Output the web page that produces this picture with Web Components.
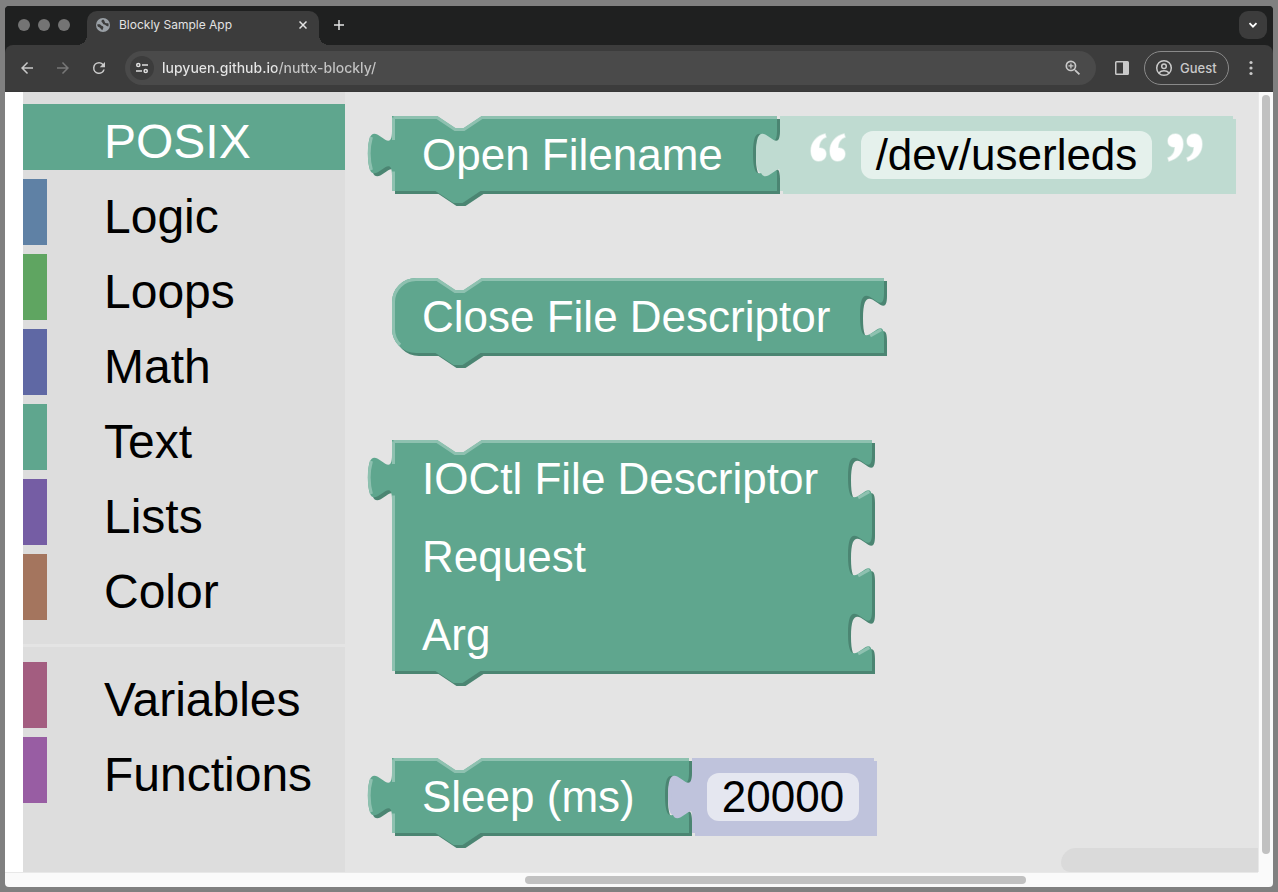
<!DOCTYPE html>
<html lang="en">
<head>
<meta charset="utf-8">
<title>Blockly Sample App</title>
<style>
  body { margin: 0; background: #808080; font-family: "Liberation Sans", Arial, sans-serif; }
</style>
</head>
<body>
<app-window>
  <tab-strip slot="chrome"></tab-strip>
  <nav-bar slot="chrome"></nav-bar>
  <tool-box slot="page">
    <tool-category colour="#5fa68e" selected>POSIX</tool-category>
    <tool-category colour="#5f81a5">Logic</tool-category>
    <tool-category colour="#5fa561">Loops</tool-category>
    <tool-category colour="#5f68a4">Math</tool-category>
    <tool-category colour="#5fa68e">Text</tool-category>
    <tool-category colour="#755da4">Lists</tool-category>
    <tool-category colour="#a4755e">Color</tool-category>
    <tool-separator></tool-separator>
    <tool-category colour="#a35d80">Variables</tool-category>
    <tool-category colour="#985da3">Functions</tool-category>
  </tool-box>
  <block-flyout slot="page">
    <block-row>
      <code-block output inputs="1"><block-label>Open Filename</block-label></code-block>
      <value-block kind="text" value="/dev/userleds"></value-block>
    </block-row>
    <block-row>
      <code-block inputs="1"><block-label>Close File Descriptor</block-label></code-block>
    </block-row>
    <block-row>
      <code-block output inputs="3">
        <block-label>IOCtl File Descriptor</block-label>
        <block-label>Request</block-label>
        <block-label>Arg</block-label>
      </code-block>
    </block-row>
    <block-row>
      <code-block output inputs="1"><block-label>Sleep (ms)</block-label></code-block>
      <value-block kind="number" value="20000"></value-block>
    </block-row>
  </block-flyout>
</app-window>

<script>
class BaseElement extends HTMLElement {
  constructor() {
    super();
    this.attachShadow({ mode: "open" });
  }
  connectedCallback() {
    this.shadowRoot.innerHTML = this.template();
    this.ready();
  }
  template() { return ""; }
  ready() {}
}

/* Browser window: chrome bars on top, page with its two scrollbars below. */
class AppWindow extends BaseElement {
  template() {
    return `<style>
      :host { display: block; box-sizing: border-box; height: 100vh; min-height: 840px; padding: 6px 5px 5px; }
      .frame { display: flex; flex-direction: column; height: 100%; border-radius: 4px; overflow: hidden; background: #fafafa; }
      .chrome { flex: none; background: #1f2020; }
      .page { display: grid; flex: 1; min-height: 0; grid-template-columns: 1fr 15px; grid-template-rows: 1fr 15px; }
      .content { display: flex; min-width: 0; overflow: hidden; padding-left: 18px; background: #fff; }
      .v { box-sizing: border-box; padding: 3px 3px 18px 3px; border-left: 1px solid #e8e8e8; }
      .h { box-sizing: border-box; padding: 3px 0 3px; border-top: 1px solid #e8e8e8; display: grid; grid-template-columns: 520fr 501fr 232fr; }
      .thumb { border-radius: 4px; background: #c1c1c1; height: 100%; }
      .h .thumb { grid-column: 2; height: 8px; }
    </style>
    <div class="frame">
      <div class="chrome"><slot name="chrome"></slot></div>
      <div class="page">
        <main class="content"><slot name="page"></slot></main>
        <div class="v"><div class="thumb"></div></div>
        <div class="h"><div class="thumb"></div></div>
      </div>
    </div>`;
  }
}

class TabStrip extends BaseElement {
  template() {
    return `<style>
      :host { display: flex; height: 39px; box-sizing: border-box; padding: 5px 6px 0 13px; background: #1f2020; color: #e3e3e3; font: 500 12px Inter, sans-serif; }
      .lights { display: flex; gap: 8px; padding: 8px 17px 0 0; }
      .lights i { width: 12px; height: 12px; border-radius: 50%; background: #747474; }
      .tab { position: relative; display: flex; box-sizing: border-box; align-items: center; width: 232px; padding: 0 8px 7px 8px; border-radius: 10px 10px 0 0; background: #3c3c3c; }
      .tab::before, .tab::after { content: ""; position: absolute; bottom: 0; width: 10px; height: 10px; }
      .tab::before { left: -10px; background: radial-gradient(circle at 0 0, transparent 10px, #3c3c3c 10px); }
      .tab::after { right: -10px; background: radial-gradient(circle at 100% 0, transparent 10px, #3c3c3c 10px); }
      .title { flex: 1; padding-left: 8px; font-weight: 400; }
      button { display: grid; place-items: center; padding: 0; border: 0; background: none; color: inherit; }
      .close { width: 16px; height: 16px; }
      .new { width: 28px; height: 28px; margin-left: 6px; }
      .search { width: 28px; height: 28px; margin-left: auto; border-radius: 9px; background: #3c3c3c; }
      svg { display: block; }
    </style>
    <div class="lights"><i></i><i></i><i></i></div>
    <div class="tab">
      <svg width="16" height="16" viewBox="0 0 16 16"><circle cx="8" cy="8" r="7" fill="#9aa0a6"/><path d="M2.200 7.400C4.500 6.800 6 7.400 6.500 8.800C8 9 8.600 9.800 8.300 11C7.800 11.500 7.600 12.400 7.500 13.300C5.600 12.600 6 11.400 4.600 10.600C3 9.800 2.200 9 2.200 7.400ZM8.200 2.400C6.300 3 6 4.300 6.900 5.200C8 5.500 7.500 7 8.900 7.400C10.600 7.300 11 9 13.200 9.600C13.800 8.500 13.700 7.200 13.300 6.200C12 6.600 11.300 5.800 10.400 6C9.300 5 10.200 4 8.200 2.400Z" fill="#3c3c3c"/></svg>
      <span class="title">Blockly Sample App</span>
      <button class="close" aria-label="Close tab"><svg width="8" height="8" viewBox="0 0 8 8" stroke="currentColor" stroke-width="1.500"><path d="M.5.5l7 7M7.500.5l-7 7"/></svg></button>
    </div>
    <button class="new" aria-label="New tab"><svg width="12" height="12" viewBox="0 0 12 12" stroke="currentColor" stroke-width="1.500"><path d="M6 1v10M1 6h10"/></svg></button>
    <button class="search" aria-label="Search tabs"><svg width="10" height="10" viewBox="0 0 10 10" fill="none" stroke="#fff" stroke-width="1.800"><path d="M1.500 3.200 5 6.700 8.500 3.200"/></svg></button>`;
  }
}

class NavBar extends BaseElement {
  template() {
    return `<style>
      :host { display: flex; align-items: center; height: 47px; box-sizing: border-box; padding: 0 13px; background: #3c3c3c; color: #c9c9c9; font: 14px Inter, sans-serif; border-bottom: 1px solid #383838; border-radius: 8px 8px 0 0; }
      button { display: grid; place-items: center; box-sizing: border-box; width: 18px; height: 34px; padding: 0; border: 0; background: none; color: inherit; font: inherit; }
      svg { display: block; fill: currentColor; }
      .nav { display: flex; gap: 18px; }
      .nav .off { color: #777; }
      .omni { display: flex; flex: 1; align-items: center; height: 34px; margin-left: 17px; padding: 0 15px 0 5px; border-radius: 17px; background: #4a4a4a; }
      .site { width: 24px; height: 24px; border-radius: 50%; background: #3c3c3c; color: #dedede; }
      input { flex: 1; min-width: 0; height: 22px; margin: 0 0 2px 8px; padding: 0; border: 0; outline: 0; color: #e3e3e3; font: inherit; font-weight: 500;
        background: linear-gradient(90deg, #e6e6e6 115px, #c4c4c4 115px); -webkit-background-clip: text; background-clip: text; -webkit-text-fill-color: transparent; }
      .panel { margin: 0 13px 0 17px; }
      .guest { display: flex; align-items: center; gap: 7px; width: 85px; padding: 0 0 0 10px; border: 1px solid #8a8a8a; border-radius: 17px; font-size: 13px; font-weight: 500; }
      .more { margin-left: 13px; }
    </style>
    <div class="nav">
      <button aria-label="Back"><svg width="18" height="18" viewBox="0 0 24 24"><path d="M20 11H7.830l5.590-5.590L12 4l-8 8 8 8 1.410-1.410L7.830 13H20z"/></svg></button>
      <button class="off" aria-label="Forward"><svg width="18" height="18" viewBox="0 0 24 24"><path d="M12 4l-1.410 1.410L16.170 11H4v2h12.170l-5.580 5.590L12 20l8-8z"/></svg></button>
      <button aria-label="Reload"><svg width="18" height="18" viewBox="0 0 24 24"><path d="M17.650 6.350A7.960 7.960 0 0 0 12 4a8 8 0 1 0 7.730 10h-2.080A6 6 0 1 1 12 6c1.660 0 3.140.69 4.220 1.780L13 11h7V4z"/></svg></button>
    </div>
    <div class="omni">
      <button class="site" aria-label="Site information"><svg width="14" height="14" viewBox="0 0 14 14" fill="none" stroke="currentColor" stroke-width="1.500" style="fill:none"><circle cx="3.300" cy="4" r="1.600"/><path d="M7 4h6M1 10h6"/><circle cx="10.700" cy="10" r="1.600"/></svg></button>
      <input type="text" aria-label="Address" value="lupyuen.github.io/nuttx-blockly/">
      <button aria-label="Zoom"><svg width="20" height="20" viewBox="0 0 24 24"><path d="M15.500 14h-.79l-.28-.27A6.500 6.500 0 1 0 13.730 14.430l.27.28v.79l5 4.990L20.490 19zm-6 0a4.500 4.500 0 1 1 0-9 4.500 4.500 0 0 1 0 9z"/><path d="M12.500 8.700h-2.200V6.500H8.700v2.200H6.500v1.600h2.200v2.200h1.600v-2.200h2.200z"/></svg></button>
    </div>
    <button class="panel" aria-label="Side panel"><svg width="16" height="16" viewBox="0 0 16 16"><path fill-rule="evenodd" d="M2.500 1h11Q15 1 15 2.500v11Q15 15 13.500 15h-11Q1 15 1 13.500v-11Q1 1 2.500 1zm0 1.500v11H9v-11z"/></svg></button>
    <button class="guest"><svg width="18" height="18" viewBox="0 0 18 18" style="fill:none" stroke="currentColor" stroke-width="1.500"><circle cx="9" cy="9" r="7.300"/><circle cx="9" cy="7.200" r="2.300"/><path d="M3.800 14q2.200-2.200 5.200-2.200t5.200 2.200"/></svg>Guest</button>
    <button class="more" aria-label="More"><svg width="4" height="16" viewBox="0 0 4 16"><circle cx="2" cy="2.500" r="1.600"/><circle cx="2" cy="8" r="1.600"/><circle cx="2" cy="13.500" r="1.600"/></svg></button>`;
  }
}

class ToolBox extends BaseElement {
  template() {
    return `<style>
      :host { display: flex; flex: none; flex-direction: column; box-sizing: border-box; width: 322px; padding-top: 12px; background: #ddd; }
    </style><slot></slot>`;
  }
}

class ToolCategory extends BaseElement {
  template() {
    return `<style>
      :host { display: block; margin-bottom: 9px; }
      button { display: block; box-sizing: border-box; width: 100%; height: 66px; margin: 0; padding: 10px 0 0 57px; border: 0; border-left: 24px solid ${this.getAttribute("colour")}; background: none; color: #000; font: 48px/56px "Liberation Sans", Arial, sans-serif; text-align: left; white-space: nowrap; }
      :host([selected]) button { background: ${this.getAttribute("colour")}; color: #fff; }
    </style><button><slot></slot></button>`;
  }
}

class ToolSeparator extends BaseElement {
  template() {
    return `<style>:host { display: block; height: 3px; margin: 15px 0; background: #e4e4e4; }</style>`;
  }
}

class BlockFlyout extends BaseElement {
  template() {
    return `<style>
      :host { position: relative; display: flex; flex: 1; min-width: 0; flex-direction: column; gap: 84px; padding: 24px 0 0 47px; background: #e4e4e4; }
      .bar { position: absolute; right: 0; bottom: 0; width: 197px; height: 24px; border-radius: 15px 0 0 9px; background: #dadada; }
    </style><slot></slot><div class="bar"></div>`;
  }
}

class BlockRow extends BaseElement {
  template() {
    return `<style>:host { display: flex; align-items: flex-start; }</style><slot></slot>`;
  }
}

class BlockLabel extends BaseElement {
  template() {
    return `<style>:host { display: block; height: 78px; font-size: 44px; line-height: 78px; white-space: nowrap; }</style><slot></slot>`;
  }
}

/* Outlines are in block units; one unit is three pixels on screen. */
const UNIT = 3;
const TAB_LEFT = "V20c0-10-8 8-8-7.500s8 2.500 8-7.500";

/* Statement block with puzzle-tab sockets, one for each row of 26 units. */
class CodeBlock extends BaseElement {
  template() {
    return `<style>
      :host { position: relative; display: block; flex: none; box-sizing: border-box; padding: 0 57px 0 30px; color: #fff; }
      svg { position: absolute; left: 0; top: 0; overflow: visible; }
      .text { position: relative; }
    </style><svg aria-hidden="true"></svg><div class="text"><slot></slot></div>`;
  }
  ready() {
    const width = Math.round(this.getBoundingClientRect().width);
    const rows = Number(this.getAttribute("inputs"));
    this.style.width = width + "px";
    this.draw(width / UNIT - 1, rows);
  }
  draw(w, rows) {
    const h = rows * 26 - 1;
    const output = this.hasAttribute("output");
    let right = "", shine = "";
    for (let i = 0; i < rows; i++) {
      const y = i * 26 + 5;
      right += `V${y}c0 10-8-8-8 7.500s8-2.500 8 7.500`;
      shine += `M${w - 4.600} ${y + 14.300}l3.700-2.100`;
    }
    const start = output ? "M0 0" : "M0 8A8 8 0 0 1 8 0";
    const end = output ? `H0${TAB_LEFT}z` : "H8a8 8 0 0 1-8-8z";
    const body = `${start}H15l6 4h3l6-4H${w}${right}V${h}H29.500l-6 4h-3l-6-4${end}`;
    const edge = output
      ? `M.5 ${h}V18.500m-7.360-.5q-1.520-5.500 0-11m7.360 1V.5`
      : `M2.700 ${h - 2.700}A7.500 7.500 0 0 1 .5 ${h - 8}V8A7.500 7.500 0 0 1 8 .5`;
    const top = (output ? "M.5.5" : "M8 .5") + `H15l6 4h3l6-4H${w}`;
    this.shadowRoot.querySelector("svg").innerHTML =
      `<g transform="scale(${UNIT})">
        <path d="${body}" fill="#4b8572" transform="translate(1 1)"/>
        <path d="${body}" fill="#5fa68e"/>
        <path d="${edge}${top}${shine}" fill="none" stroke="#8ec1b0"/>
      </g>`;
  }
}

/* Shadow block that plugs into a socket and holds one editable field. */
class ValueBlock extends BaseElement {
  template() {
    const text = this.getAttribute("kind") === "text";
    const fill = text ? "#bfdbd1" : "#bfc3dc";
    const field = text ? "#e5f1ec" : "#e5e7f0";
    const mark = `<path fill="#fff" stroke="#fff" stroke-opacity=".5" stroke-width="1.500" d="M15 2C7 4 1 10 1 19C1 25 4 29 8.500 29C13 29 16 26 16 22C16 18 13 16 9 16C9 11 11 7 16 5zM34 2C26 4 20 10 20 19C20 25 23 29 27.500 29C32 29 35 26 35 22C35 18 32 16 28 16C28 11 30 7 35 5z"/>`;
    const quote = flip => text
      ? `<svg class="quote" width="36" height="36" viewBox="0 5 36 36" aria-hidden="true"><g${flip ? ' transform="rotate(180 18 15.500)"' : ""}>${mark}</g></svg>` : "";
    return `<style>
      :host { position: relative; display: flex; flex: none; align-items: center; gap: 15px; box-sizing: border-box; height: 78px; padding: ${text ? "0 33px 0 30px" : "0 18px 0 15px"}; }
      .shape { position: absolute; left: 0; top: 0; overflow: visible; }
      .quote { position: relative; display: block; overflow: visible; }
      input { position: relative; box-sizing: border-box; width: ${text ? 291 : 152}px; height: 48px; margin: 0; padding: 0; border: 0; border-radius: 12px; outline: 0; background: ${field}; color: #000; font: 44px/48px "Liberation Sans", Arial, sans-serif; text-align: center; }
    </style>
    <svg class="shape" aria-hidden="true" data-fill="${fill}"></svg>
    ${quote(false)}<input type="text" aria-label="${text ? "Filename" : "Milliseconds"}" value="${this.getAttribute("value")}">${quote(true)}`;
  }
  ready() {
    const shape = this.shadowRoot.querySelector(".shape");
    const w = this.getBoundingClientRect().width / UNIT - 1;
    const body = `M0 0H${w}V25H0${TAB_LEFT}z`;
    shape.innerHTML = `<g transform="scale(${UNIT})" fill="${shape.dataset.fill}">
      <path d="M1 1H${w + 1}V26H1z"/><path d="${body}"/><path d="${body}" transform="translate(1 1)"/></g>`;
  }
}

/* Labels are defined before the blocks, which measure them. */
customElements.define("app-window", AppWindow);
customElements.define("tab-strip", TabStrip);
customElements.define("nav-bar", NavBar);
customElements.define("tool-box", ToolBox);
customElements.define("tool-category", ToolCategory);
customElements.define("tool-separator", ToolSeparator);
customElements.define("block-flyout", BlockFlyout);
customElements.define("block-row", BlockRow);
customElements.define("block-label", BlockLabel);
customElements.define("code-block", CodeBlock);
customElements.define("value-block", ValueBlock);
</script>
</body>
</html>
